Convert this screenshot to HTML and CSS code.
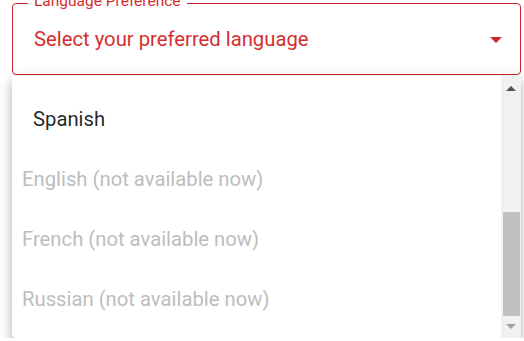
FILE: index.html
```html
<!DOCTYPE html>
<html lang="en">
<head>
    <meta charset="UTF-8">
    <meta name="viewport" content="width=device-width, initial-scale=1.0">
    <title>Language Preference</title>
    <link rel="stylesheet" href="styles.css">
</head>
<body>
    <div class="container">
        <div class="field">
            <span class="field-label">Language Preference</span>
            <span class="field-value">Select your preferred language</span>
            <svg class="field-arrow" width="12" height="6" viewBox="0 0 12 6">
                <path d="M0 0 L12 0 L6 6 Z" fill="#c62828"/>
            </svg>
        </div>

        <!-- Open dropdown -->
        <div class="menu">
            <ul class="options">
                <li class="option option-active">Spanish</li>
                <li class="option disabled">English (not available now)</li>
                <li class="option disabled">French (not available now)</li>
                <li class="option disabled">Russian (not available now)</li>
            </ul>
            <div class="scrollbar">
                <svg class="scroll-btn" width="10" height="5" viewBox="0 0 10 5">
                    <path d="M0 5 L5 0 L10 5 Z" fill="#505050"/>
                </svg>
                <div class="scroll-track">
                    <div class="scroll-thumb"></div>
                </div>
                <svg class="scroll-btn" width="10" height="5" viewBox="0 0 10 5">
                    <path d="M0 0 L10 0 L5 5 Z" fill="#a3a3a3"/>
                </svg>
            </div>
        </div>
    </div>
</body>
</html>
```

FILE: styles.css
```css
body {
    font-family: Roboto, "Liberation Sans", Arial, sans-serif;
    background-color: #ffffff;
    margin: 0;
}

.container {
    padding: 3px 3px 0 12px;
}

.field {
    position: relative;
    box-sizing: border-box;
    height: 72px;
    display: flex;
    align-items: center;
    justify-content: space-between;
    padding: 0 18px 0 21px;
    border: 1px solid #c62828;
    border-radius: 4px;
}

.field-label {
    position: absolute;
    top: -10px;
    left: 15px;
    padding: 0 6px;
    background-color: #ffffff;
    color: #d32f2f;
    font-size: 15.5px;
    line-height: 1;
}

.field-value {
    color: #d32f2f;
    font-size: 20.25px;
    line-height: 24px;
}

.field-arrow {
    display: block;
    margin-top: 2px;
}

/* Dropdown menu */
.menu {
    position: relative;
    z-index: 2;
    display: flex;
    height: 262px;
    margin-top: 1px;
    background-color: #ffffff;
    border-radius: 0 0 4px 4px;
    box-shadow: 0 5px 5px -3px rgba(0, 0, 0, 0.2),
                0 8px 10px 1px rgba(0, 0, 0, 0.14),
                0 3px 14px 2px rgba(0, 0, 0, 0.12);
}

.options {
    flex: 1;
    list-style: none;
    margin: 0;
    padding: 13px 0 8px 0;
}

.option {
    height: 60px;
    display: flex;
    align-items: center;
    padding: 0 10px;
    font-size: 20.25px;
    line-height: 24px;
    color: rgba(0, 0, 0, 0.87);
}

.option-active {
    padding-left: 21px;
}

.disabled {
    color: #bdbdbd;
}

/* Scrollbar */
.scrollbar {
    width: 20px;
    display: flex;
    flex-direction: column;
    align-items: center;
    background-color: #f1f1f1;
}

.scroll-btn {
    display: block;
    margin: 10px 0 8px;
}

.scroll-btn:last-child {
    margin: 8px 0 9px;
}

.scroll-track {
    flex: 1;
    width: 100%;
    display: flex;
    flex-direction: column;
    justify-content: flex-end;
}

.scroll-thumb {
    height: 104px;
    margin: 0 1px 0 2px;
    background-color: #c1c1c1;
}
```
